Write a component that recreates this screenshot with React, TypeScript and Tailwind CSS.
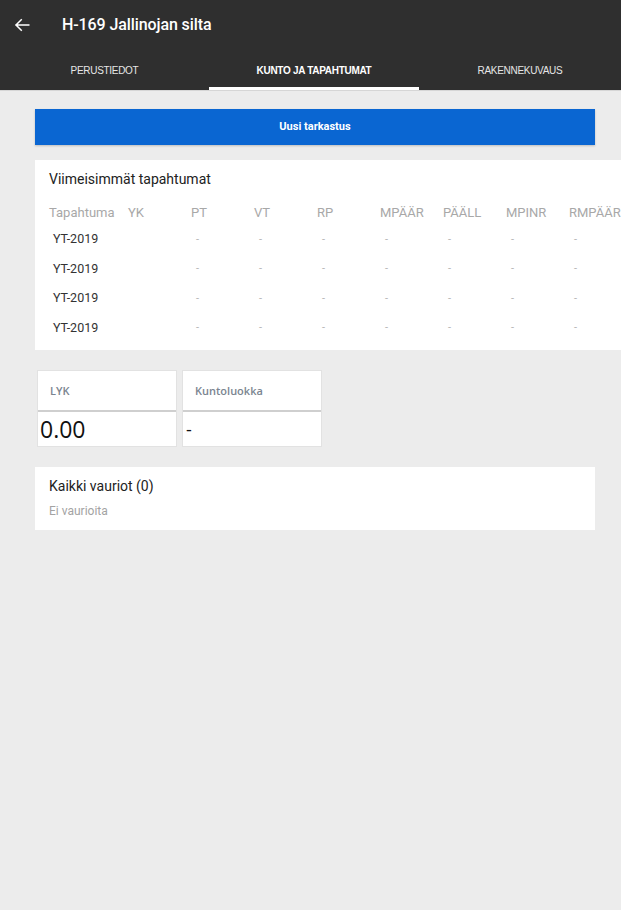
import React from "react";

const cols = ["YK", "PT", "VT", "RP", "MPÄÄR", "PÄÄLL", "MPINR", "RMPÄÄR"];

export default function App() {
  return (
    <div className="w-[621px] h-[910px] overflow-hidden bg-[#ececec]" style={{ fontFamily: "Roboto, 'Liberation Sans', sans-serif" }}>
      <header className="bg-[#2f2f2f] text-white">
        <div className="h-[50px] flex items-center">
          <div className="w-[40px] flex justify-center pl-[3px]">
            <svg width="18" height="18" viewBox="0 0 24 24" fill="none" stroke="white" strokeWidth="2" strokeLinecap="square">
              <path d="M21 12H4M11 5l-7 7 7 7" />
            </svg>
          </div>
          <div className="ml-[22px] text-[16px] font-medium tracking-[-0.1px]">H-169 Jallinojan silta</div>
        </div>
        <div className="flex h-[40px]" style={{ fontFamily: "'Liberation Sans', Arial, sans-serif" }}>
          <div className="w-[209px] flex items-center justify-center text-[10px] text-[#e6e6e6] tracking-[-0.3px] pt-[1px]">PERUSTIEDOT</div>
          <div className="w-[210px] flex flex-col">
            <div className="flex-1 flex items-center justify-center text-[10px] font-bold tracking-[-0.3px] pt-[3px]">KUNTO JA TAPAHTUMAT</div>
            <div className="h-[3px] bg-white" />
          </div>
          <div className="flex-1 flex items-center justify-center text-[10px] text-[#e6e6e6] tracking-[-0.3px] pt-[1px]">RAKENNEKUVAUS</div>
        </div>
      </header>
      <div className="h-[1px] bg-[#d6d6d6]" />
      <main className="pl-[35px] pt-[18px]">
        <button className="w-[560px] h-[36px] bg-[#0a66d2] text-white text-[11px] font-bold flex items-center justify-center shadow-[0_1px_2px_rgba(0,0,0,0.2)]">
          Uusi tarkastus
        </button>
        <section className="mt-[15px] w-[620px] h-[190px] bg-white pt-[9px]">
          <div className="pl-[14px] text-[14px] text-[#222] h-[20px] leading-[20px]">Viimeisimmät tapahtumat</div>
          <div className="mt-[14px] pl-[14px] grid grid-cols-[79px_repeat(8,63px)] text-[13px] text-[#a8a8a8] h-[20px] leading-[20px] whitespace-nowrap">
            <div>Tapahtuma</div>
            {cols.map((c) => (
              <div key={c}>{c}</div>
            ))}
          </div>
          <div className="mt-[2px]">
            {[0, 1, 2, 3].map((i) => (
              <div key={i} className="pl-[14px] grid grid-cols-[79px_repeat(8,63px)] h-[29.5px] items-center">
                <div className="pl-[4px] text-[12.5px] text-[#333]">YT-2019</div>
                <div />
                {cols.slice(1).map((c) => (
                  <div key={c} className="pl-[5px] text-[11px] text-[#b5b5b5]">-</div>
                ))}
              </div>
            ))}
          </div>
        </section>
        <div className="mt-[20px] ml-[2px] flex gap-[5px]" style={{ fontFamily: "'Open Sans', 'Noto Sans', sans-serif" }}>
          {[
            { label: "LYK", value: "0.00", big: true },
            { label: "Kuntoluokka", value: "-", big: false },
          ].map((c) => (
            <div key={c.label} className="w-[140px] h-[77px] bg-white border border-[#e2e2e2] flex flex-col">
              <div className="h-[42px] flex items-center pl-[12px] pt-[2px] text-[11px] font-semibold text-[#7b8590] border-b-[2px] border-[#cfcfcf]">
                {c.label}
              </div>
              <div className={c.big ? "pl-[2px] text-[23px] text-[#111] leading-[34px]" : "pl-[3px] text-[18px] text-[#111] leading-[34px]"}>
                {c.value}
              </div>
            </div>
          ))}
        </div>
        <section className="mt-[20px] w-[560px] h-[63px] bg-white pl-[14px] pt-[9px]">
          <div className="text-[14px] text-[#222] h-[20px] leading-[20px]">Kaikki vauriot (0)</div>
          <div className="mt-[7px] text-[12px] text-[#a3a3a3] leading-[16px]">Ei vaurioita</div>
        </section>
      </main>
    </div>
  );
}
